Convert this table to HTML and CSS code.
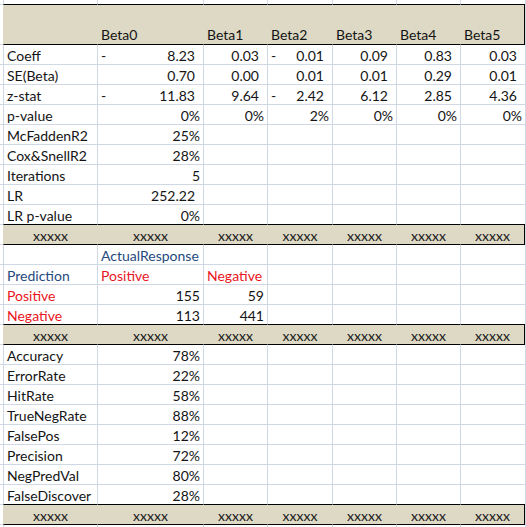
FILE: index.html
```html
<!DOCTYPE html>
<html>
<head>
<meta charset="utf-8">
<link rel="stylesheet" href="styles.css">
</head>
<body>
<div class="sheet">
  <div class="row top"><div class="c s"></div><div class="c"></div><div class="c"></div><div class="c"></div><div class="c"></div><div class="c"></div><div class="c"></div><div class="c"></div><div class="c t"></div></div>
  <div class="row head"><div class="c s"></div><div class="c"></div><div class="c">Beta0</div><div class="c">Beta1</div><div class="c">Beta2</div><div class="c">Beta3</div><div class="c">Beta4</div><div class="c">Beta5</div><div class="c t"></div></div>

  <div class="row"><div class="c s"></div><div class="c">Coeff</div><div class="c acc"><span>-</span><span>8.23</span></div><div class="c acc"><span>0.03</span></div><div class="c acc"><span>-</span><span>0.01</span></div><div class="c acc"><span>0.09</span></div><div class="c acc"><span>0.83</span></div><div class="c acc"><span>0.03</span></div><div class="c t"></div></div>
  <div class="row"><div class="c s"></div><div class="c">SE(Beta)</div><div class="c acc"><span>0.70</span></div><div class="c acc"><span>0.00</span></div><div class="c acc"><span>0.01</span></div><div class="c acc"><span>0.01</span></div><div class="c acc"><span>0.29</span></div><div class="c acc"><span>0.01</span></div><div class="c t"></div></div>
  <div class="row"><div class="c s"></div><div class="c">z-stat</div><div class="c acc"><span>-</span><span>11.83</span></div><div class="c acc"><span>9.64</span></div><div class="c acc"><span>-</span><span>2.42</span></div><div class="c acc"><span>6.12</span></div><div class="c acc"><span>2.85</span></div><div class="c acc"><span>4.36</span></div><div class="c t"></div></div>
  <div class="row"><div class="c s"></div><div class="c">p-value</div><div class="c num">0%</div><div class="c num">0%</div><div class="c num">2%</div><div class="c num">0%</div><div class="c num">0%</div><div class="c num">0%</div><div class="c t"></div></div>
  <div class="row"><div class="c s"></div><div class="c">McFaddenR2</div><div class="c num">25%</div><div class="c"></div><div class="c"></div><div class="c"></div><div class="c"></div><div class="c"></div><div class="c t"></div></div>
  <div class="row"><div class="c s"></div><div class="c">Cox&amp;SnellR2</div><div class="c num">28%</div><div class="c"></div><div class="c"></div><div class="c"></div><div class="c"></div><div class="c"></div><div class="c t"></div></div>
  <div class="row"><div class="c s"></div><div class="c">Iterations</div><div class="c num">5</div><div class="c"></div><div class="c"></div><div class="c"></div><div class="c"></div><div class="c"></div><div class="c t"></div></div>
  <div class="row"><div class="c s"></div><div class="c">LR</div><div class="c acc"><span>252.22</span></div><div class="c"></div><div class="c"></div><div class="c"></div><div class="c"></div><div class="c"></div><div class="c t"></div></div>
  <div class="row pre"><div class="c s"></div><div class="c">LR p-value</div><div class="c num">0%</div><div class="c"></div><div class="c"></div><div class="c"></div><div class="c"></div><div class="c"></div><div class="c t"></div></div>
  <div class="row band"><div class="c s"></div><div class="c">xxxxx</div><div class="c">xxxxx</div><div class="c">xxxxx</div><div class="c">xxxxx</div><div class="c">xxxxx</div><div class="c">xxxxx</div><div class="c">xxxxx</div><div class="c t"></div></div>

  <div class="row"><div class="c s"></div><div class="c"></div><div class="c blue">ActualResponse</div><div class="c"></div><div class="c"></div><div class="c"></div><div class="c"></div><div class="c"></div><div class="c t"></div></div>
  <div class="row"><div class="c s"></div><div class="c blue">Prediction</div><div class="c red">Positive</div><div class="c red">Negative</div><div class="c"></div><div class="c"></div><div class="c"></div><div class="c"></div><div class="c t"></div></div>
  <div class="row"><div class="c s"></div><div class="c red">Positive</div><div class="c num">155</div><div class="c num">59</div><div class="c"></div><div class="c"></div><div class="c"></div><div class="c"></div><div class="c t"></div></div>
  <div class="row pre"><div class="c s"></div><div class="c red">Negative</div><div class="c num">113</div><div class="c num">441</div><div class="c"></div><div class="c"></div><div class="c"></div><div class="c"></div><div class="c t"></div></div>
  <div class="row band"><div class="c s"></div><div class="c">xxxxx</div><div class="c">xxxxx</div><div class="c">xxxxx</div><div class="c">xxxxx</div><div class="c">xxxxx</div><div class="c">xxxxx</div><div class="c">xxxxx</div><div class="c t"></div></div>

  <div class="row"><div class="c s"></div><div class="c">Accuracy</div><div class="c num">78%</div><div class="c"></div><div class="c"></div><div class="c"></div><div class="c"></div><div class="c"></div><div class="c t"></div></div>
  <div class="row"><div class="c s"></div><div class="c">ErrorRate</div><div class="c num">22%</div><div class="c"></div><div class="c"></div><div class="c"></div><div class="c"></div><div class="c"></div><div class="c t"></div></div>
  <div class="row"><div class="c s"></div><div class="c">HitRate</div><div class="c num">58%</div><div class="c"></div><div class="c"></div><div class="c"></div><div class="c"></div><div class="c"></div><div class="c t"></div></div>
  <div class="row"><div class="c s"></div><div class="c">TrueNegRate</div><div class="c num">88%</div><div class="c"></div><div class="c"></div><div class="c"></div><div class="c"></div><div class="c"></div><div class="c t"></div></div>
  <div class="row"><div class="c s"></div><div class="c">FalsePos</div><div class="c num">12%</div><div class="c"></div><div class="c"></div><div class="c"></div><div class="c"></div><div class="c"></div><div class="c t"></div></div>
  <div class="row"><div class="c s"></div><div class="c">Precision</div><div class="c num">72%</div><div class="c"></div><div class="c"></div><div class="c"></div><div class="c"></div><div class="c"></div><div class="c t"></div></div>
  <div class="row"><div class="c s"></div><div class="c">NegPredVal</div><div class="c num">80%</div><div class="c"></div><div class="c"></div><div class="c"></div><div class="c"></div><div class="c"></div><div class="c t"></div></div>
  <div class="row pre"><div class="c s"></div><div class="c">FalseDiscover</div><div class="c num">28%</div><div class="c"></div><div class="c"></div><div class="c"></div><div class="c"></div><div class="c"></div><div class="c t"></div></div>
  <div class="row band"><div class="c s"></div><div class="c">xxxxx</div><div class="c">xxxxx</div><div class="c">xxxxx</div><div class="c">xxxxx</div><div class="c">xxxxx</div><div class="c">xxxxx</div><div class="c">xxxxx</div><div class="c t"></div></div>
  <div class="row tail"><div class="c s"></div><div class="c"></div><div class="c"></div><div class="c"></div><div class="c"></div><div class="c"></div><div class="c"></div><div class="c"></div><div class="c t"></div></div>
</div>
</body>
</html>
```
FILE: styles.css
```css
* { box-sizing: border-box; }

html, body {
  margin: 0;
  padding: 0;
  background: #ffffff;
}

body {
  width: 526px;
  height: 527px;
  overflow: hidden;
  font-family: Lato, "Liberation Sans", sans-serif;
  font-size: 14px;
  color: #141414;
}

.sheet {
  display: flex;
  flex-direction: column;
}

.row {
  display: grid;
  grid-template-columns: 3px 94px 106px 64px 65px 64px 64px 65px 1px;
  height: 20px;
}

.c {
  display: flex;
  align-items: flex-end;
  justify-content: flex-start;
  border-left: 1px solid #d0d7e5;
  border-bottom: 1px solid #d0d7e5;
  padding: 0 3px;
  line-height: 17px;
  white-space: nowrap;
  overflow: visible;
  min-width: 0;
}

.c.s { border-left: none; padding: 0; }
.c.t { padding: 0; }

.num { justify-content: flex-end; padding-right: 3px; }

.acc { justify-content: flex-end; padding-right: 8px; }
.acc span:first-child:not(:last-child) { margin-right: auto; }

.blue { color: #1f497d; }
.red { color: #e8141e; }

.top { height: 5px; }
.top > .c:nth-child(n+2):nth-child(-n+8) { border-bottom-color: #000; }

.tail { height: 3px; }
.tail > .c { border-bottom: none; }

.head { height: 40px; }

.head > .c:nth-child(n+2):nth-child(-n+8),
.band > .c:nth-child(n+2):nth-child(-n+8) {
  background: #ddd9c4;
  border-left-color: transparent;
  border-bottom-color: #000;
}

.head > .c:nth-child(2),
.band > .c:nth-child(2) { border-left-color: #000; }

.head > .c:nth-child(8),
.band > .c:nth-child(8) { border-right: 1px solid #000; }

.head > .c { padding-bottom: 1px; }

.band > .c { justify-content: center; color: #1a1a1a; }

.pre > .c:nth-child(n+2):nth-child(-n+8) { border-bottom-color: #000; }
```
